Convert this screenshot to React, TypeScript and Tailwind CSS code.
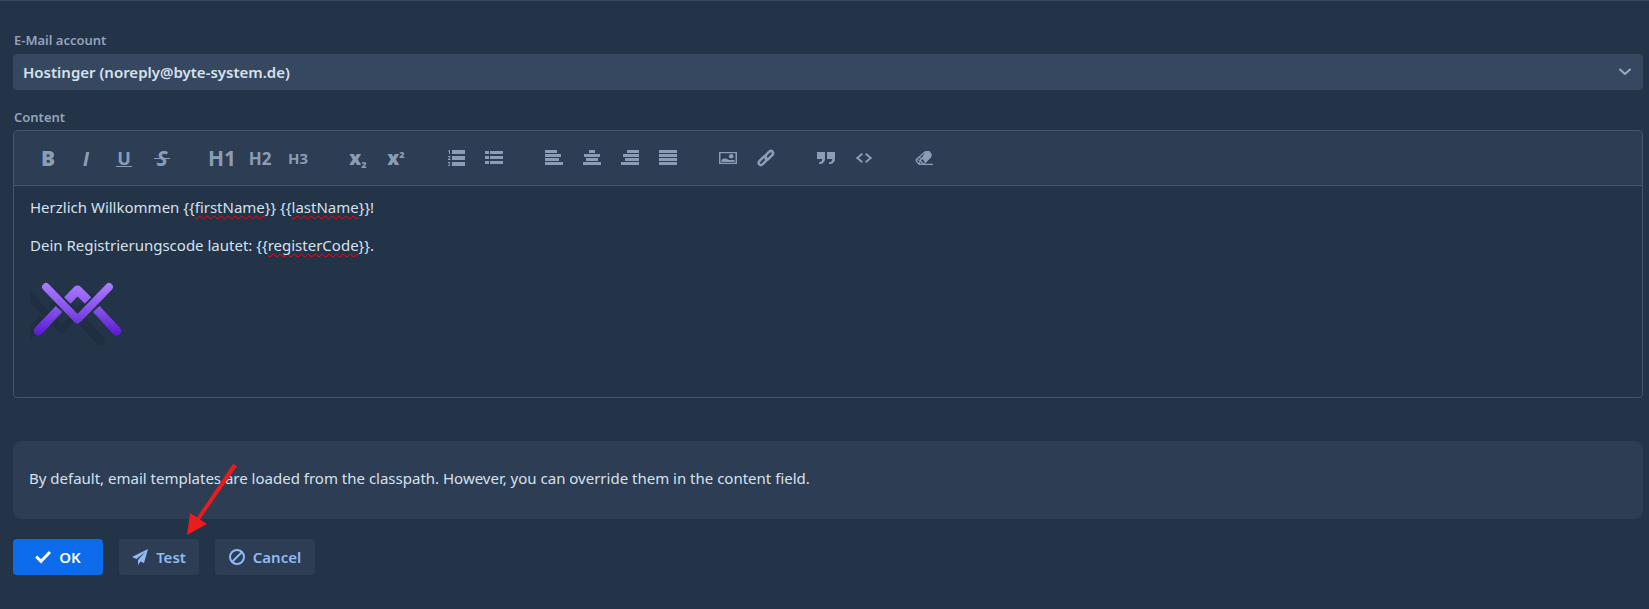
import type { ReactNode } from "react";

function ToolButton({ label, children }: { label: string; children: ReactNode }) {
  return (
    <button
      type="button"
      aria-label={label}
      className="flex h-9 w-[38px] items-center justify-center font-bold leading-none hover:text-[#dbe5f2]"
    >
      {children}
    </button>
  );
}

function Glyph({ children }: { children: ReactNode }) {
  return (
    <svg viewBox="0 0 18 18" className="size-[18px]" fill="currentColor" aria-hidden="true">
      {children}
    </svg>
  );
}

function Bars({ rows }: { rows: [number, number][] }) {
  return (
    <Glyph>
      {rows.map(([x, width], i) => (
        <rect key={i} x={x} y={1 + i * 4} width={width} height="3" />
      ))}
    </Glyph>
  );
}

function Toolbar() {
  return (
    <div
      role="toolbar"
      aria-label="Formatting"
      className="flex min-h-[55px] flex-wrap items-center gap-x-[22px] border-b border-[#43546b] bg-[#2d3d53] px-[15px] text-[#8b9cb5]"
    >
      <div className="flex">
        <ToolButton label="Bold"><span className="text-[21px] font-black">B</span></ToolButton>
        <ToolButton label="Italic"><span className="font-['Liberation_Sans',sans-serif] text-[21px] italic">I</span></ToolButton>
        <ToolButton label="Underline">
          <span className="border-b border-current px-px text-lg leading-4">U</span>
        </ToolButton>
        <ToolButton label="Strikethrough">
          <span className="relative text-[21px] italic">
            S<span className="absolute inset-x-[-2px] top-1/2 h-px bg-current" />
          </span>
        </ToolButton>
      </div>
      <div className="flex">
        <ToolButton label="Heading 1"><span className="text-[21px]">H1</span></ToolButton>
        <ToolButton label="Heading 2"><span className="text-[17px]">H2</span></ToolButton>
        <ToolButton label="Heading 3"><span className="text-[15px]">H3</span></ToolButton>
      </div>
      <div className="flex">
        <ToolButton label="Subscript">
          <span className="flex items-center text-[19px] font-black">x<span className="pt-3 text-[9px]">2</span></span>
        </ToolButton>
        <ToolButton label="Superscript">
          <span className="flex items-center text-[19px] font-black">x<span className="pb-2 text-[9px]">2</span></span>
        </ToolButton>
      </div>
      <div className="flex">
        <ToolButton label="Ordered list">
          <Glyph>
            <path d="M5 1h13v4H5zM5 7h13v4H5zM5 13h13v4H5z" />
            <path
              d="M1 2l1.500-.5V5M1 7.500h2v1.300L1 10.500h2.600M1 13.500h2l-1 1.300q1.300 0 1 1-.3.8-2 .7"
              fill="none"
              stroke="currentColor"
            />
          </Glyph>
        </ToolButton>
        <ToolButton label="Bullet list">
          <Glyph>
            <path d="M0 2h4v3H0zM5 2h13v3H5zM0 7h4v3H0zM5 7h13v3H5zM0 12h4v3H0zM5 12h13v3H5z" />
          </Glyph>
        </ToolButton>
      </div>
      <div className="flex">
        <ToolButton label="Align left"><Bars rows={[[0, 12], [0, 16], [0, 14], [0, 18]]} /></ToolButton>
        <ToolButton label="Align center"><Bars rows={[[6, 6], [1, 16], [3, 12], [0, 18]]} /></ToolButton>
        <ToolButton label="Align right"><Bars rows={[[6, 12], [2, 16], [4, 14], [0, 18]]} /></ToolButton>
        <ToolButton label="Justify"><Bars rows={[[0, 18], [0, 18], [0, 18], [0, 18]]} /></ToolButton>
      </div>
      <div className="flex">
        <ToolButton label="Insert image">
          <Glyph>
            <path d="M0 3h18v12H0zM1.500 4.200v9.600h15V4.200z" fillRule="evenodd" />
            <path d="M2.500 13v-2l2-1.600h2.500l3 1.600h5.500v2z" />
            <circle cx="12.200" cy="7.200" r="2.300" />
          </Glyph>
        </ToolButton>
        <ToolButton label="Insert link">
          <Glyph>
            <g fill="none" stroke="currentColor" strokeWidth="2.500" strokeLinecap="round">
              <path d="M7.600 7.400l4.400-4.500c2.600-2.400 5.600.6 3.200 3.200l-3.400 3.500c-1 1-2.300.9-3.100.2" />
              <path d="M10.200 10.600l-4.400 4.500c-2.600 2.400-5.600-.6-3.200-3.200L6 8.400c1-1 2.300-.9 3.100-.2" />
            </g>
          </Glyph>
        </ToolButton>
      </div>
      <div className="flex">
        <ToolButton label="Quote">
          <Glyph>
            <path d="M0 3h8v6c0 4-2 6-6 6v-1.500c2-.3 3.200-1.500 3.200-3.500H0zM10 3h8v6c0 4-2 6-6 6v-1.500c2-.3 3.200-1.500 3.200-3.500H10z" />
          </Glyph>
        </ToolButton>
        <ToolButton label="Code block">
          <Glyph>
            <path d="M7.300 4.700L2.300 9L7.300 13.300M10.700 4.700L15.700 9L10.700 13.300" fill="none" stroke="currentColor" strokeWidth="2" />
          </Glyph>
        </ToolButton>
      </div>
      <div className="flex">
        <ToolButton label="Clear formatting">
          <Glyph>
            <path d="M7.500 8L10.500 2h4l2.500 3.500-1 2.500-5.500 6z" />
            <path
              d="M10.500 2.500L1.200 10.500v1.500l3 3.500h4L16 7.500M1.200 10.500l4 1L8.200 15M5.200 11.500L12 4M3.800 8.500l4 1.200L10.500 13M4.200 15.500l1-4"
              fill="none"
              stroke="currentColor"
              strokeWidth="1.200"
            />
            <path d="M4 14.800h14V16H4z" />
          </Glyph>
        </ToolButton>
      </div>
    </div>
  );
}

function Misspelled({ children }: { children: ReactNode }) {
  return (
    <span className="underline decoration-[#f00a10] decoration-wavy decoration-1 underline-offset-2 [text-decoration-skip-ink:none]">
      {children}
    </span>
  );
}

function MarkShape() {
  return (
    <>
      <path d="M38.300 331L59 309M116.700 331L96.300 309" strokeWidth="9" strokeLinecap="butt" />
      <path d="M38.300 331L45 324M116.700 331L110 324" strokeWidth="9" strokeLinecap="round" />
      <path d="M67.300 300.500L77.500 290L88 300.500" strokeWidth="9" strokeLinecap="butt" />
      <path d="M46 287L77.500 319.500L109 287" strokeWidth="7.800" strokeLinecap="round" />
    </>
  );
}

function Logo() {
  return (
    <svg viewBox="30 278 96 72" className="mt-5 h-[72px] w-24" fill="none" strokeLinejoin="round" role="img" aria-label="Logo">
      <defs>
        <linearGradient id="mark" gradientUnits="userSpaceOnUse" x1="0" y1="283" x2="0" y2="335">
          <stop offset="0" stopColor="#aa7dff" />
          <stop offset="0.5" stopColor="#8851ec" />
          <stop offset="1" stopColor="#581bd0" />
        </linearGradient>
      </defs>
      <g stroke="#202e42" transform="translate(-16 10)"><MarkShape /></g>
      <g stroke="url(#mark)"><MarkShape /></g>
    </svg>
  );
}

export default function App() {
  return (
    <main className="min-h-screen border-t border-[#364860] bg-[#233348] pr-1.5 pb-8 pl-[13px] font-['Noto_Sans','Open_Sans',sans-serif] text-[15px] text-[#d7e1ee]">
      <form onSubmit={(e) => e.preventDefault()}>
        <label htmlFor="account" className="block pt-[29px] pl-px text-[13px] leading-5 font-semibold text-[#93a4bc]">
          E-Mail account
        </label>
        <div className="relative mt-1">
          <select
            id="account"
            className="block h-9 w-full appearance-none rounded bg-[#364860] px-[10px] font-semibold text-[#d7e1ee]"
          >
            <option>Hostinger (noreply@byte-system.de)</option>
          </select>
          <svg viewBox="0 0 14 8" className="pointer-events-none absolute top-[14px] right-[11px] h-2 w-[14px]" fill="none" stroke="#98a9c0" strokeWidth="2" strokeLinecap="round" strokeLinejoin="round" aria-hidden="true">
            <path d="M2 1.500L7 6L12 1.500" />
          </svg>
        </div>

        <div id="content-label" className="mt-[17px] pl-px text-[13px] leading-5 font-semibold text-[#93a4bc]">
          Content
        </div>
        <section aria-labelledby="content-label" className="mt-[3px] overflow-hidden rounded border border-[#43546b]">
          <Toolbar />
          <div
            role="textbox"
            aria-multiline="true"
            aria-labelledby="content-label"
            contentEditable
            suppressContentEditableWarning
            spellCheck={false}
            className="min-h-[211px] px-4 pt-2 leading-[26px] outline-none"
          >
            <p>
              Herzlich Willkommen {"{{"}<Misspelled>firstName</Misspelled>{"}} {{"}<Misspelled>lastName</Misspelled>{"}}!"}
            </p>
            <p className="mt-3">
              Dein Registrierungscode lautet: {"{{"}<Misspelled>registerCode</Misspelled>{"}}."}
            </p>
            <Logo />
          </div>
        </section>

        <div className="mt-[43px] rounded-lg bg-[#2d3d53] px-4 pt-6 pb-7 leading-[26px]">
          <p>By default, email templates are loaded from the classpath. However, you can override them in the content field.</p>
        </div>

        <div className="mt-5 flex gap-4 font-semibold">
          <button type="submit" className="flex h-9 w-[90px] items-center justify-center gap-2 rounded bg-[#0d6ceb] text-white">
            <svg viewBox="0 0 16 16" className="size-4" fill="none" stroke="currentColor" strokeWidth="3" aria-hidden="true">
              <path d="M1.200 7.500L6 12.300L15 3" />
            </svg>
            OK
          </button>
          <div className="relative">
            <button type="button" className="flex h-9 w-20 items-center justify-center gap-2 rounded bg-[#2d3d53] text-[#8fbaf6]">
              <svg viewBox="0 0 16 16" className="size-4" fill="currentColor" aria-hidden="true">
                <path d="M16 0L0 8l4.500 2L13 3L6 11v5l2.500-3.500L12 14z" />
              </svg>
              Test
            </button>
            <svg viewBox="183 463 56 73" className="pointer-events-none absolute bottom-[39px] left-16 h-[73px] w-14" aria-hidden="true">
              <path d="M187 535L190 513L197 517.500L233 464L237 466L200 519.500L207 524Z" fill="#ea1c1f" />
            </svg>
          </div>
          <button type="button" className="flex h-9 w-[100px] items-center justify-center gap-2 rounded bg-[#2d3d53] text-[#8fbaf6]">
            <svg viewBox="0 0 16 16" className="size-4" fill="none" stroke="currentColor" strokeWidth="2" aria-hidden="true">
              <circle cx="8" cy="8" r="7" />
              <path d="M3.500 12.500L12.500 3.500" />
            </svg>
            Cancel
          </button>
        </div>
      </form>
    </main>
  );
}
